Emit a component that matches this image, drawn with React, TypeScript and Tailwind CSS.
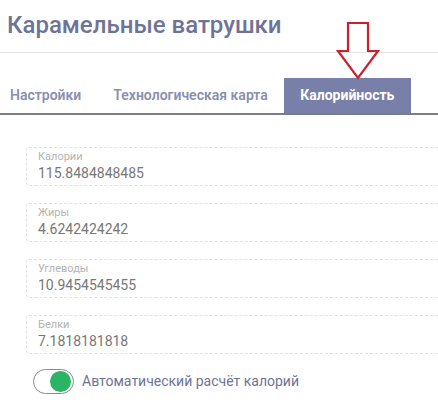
import React, { useState } from "react";

const fields = [
  { label: "Калории", value: "115.8484848485" },
  { label: "Жиры", value: "4.6242424242" },
  { label: "Углеводы", value: "10.9454545455" },
  { label: "Белки", value: "7.1818181818" },
];

const App = () => {
  const [auto, setAuto] = useState(true);

  return (
    <div className="relative w-[438px] h-[413px] bg-white overflow-hidden" style={{ fontFamily: "Roboto, 'Noto Sans', sans-serif" }}>
      <h1 className="pl-[7px] pt-[8px] h-[53px] text-[24px] leading-[34px] font-medium text-[#6d7498] border-b border-[#e6e6e6]">
        Карамельные ватрушки
      </h1>

      <div className="mt-[25px] flex items-end h-[37px] border-b-2 border-[#7b7d86] pl-[10px]">
        <button className="h-full pr-[32px] text-[14px] font-semibold text-[#8990ad]">Настройки</button>
        <button className="h-full pr-[16px] text-[14px] font-semibold text-[#8990ad]">Технологическая карта</button>
        <button className="h-full w-[127px] bg-[#7880a9] text-[14px] font-bold text-white">Калорийность</button>
      </div>

      <div className="pl-[26px] pt-[32px] flex flex-col gap-[17px]">
        {fields.map((f) => (
          <div key={f.label} className="h-[39px] w-[430px] border border-dashed border-[#e2e2e2] rounded-[3px] pl-[11px] pt-[2px]">
            <div className="text-[11px] leading-[14px] text-[#b3b3b3]">{f.label}</div>
            <div className="text-[14px] leading-[18px] text-[#777777]">{f.value}</div>
          </div>
        ))}
      </div>

      <label className="mt-[15px] ml-[33px] flex items-center gap-[8px] cursor-pointer">
        <button
          onClick={() => setAuto(!auto)}
          className={`relative w-[41px] h-[25px] rounded-full border border-[#8a8a8a] bg-white flex items-center ${auto ? "justify-end" : "justify-start"} px-[2px]`}
        >
          <span className={`block w-[21px] h-[21px] rounded-full ${auto ? "bg-[#2bb463]" : "bg-[#c4c4c4]"}`} />
        </button>
        <span className="text-[14px] text-[#6d7498]">Автоматический расчёт калорий</span>
      </label>

      <svg className="absolute left-[334px] top-[20px]" width="48" height="62" viewBox="0 0 48 62">
        <path d="M14 3 H34 V31 H44 L24 58 L4 31 H14 Z" fill="none" stroke="#c9222c" strokeWidth="2.2" strokeLinejoin="miter" />
      </svg>
    </div>
  );
};

export default App;
